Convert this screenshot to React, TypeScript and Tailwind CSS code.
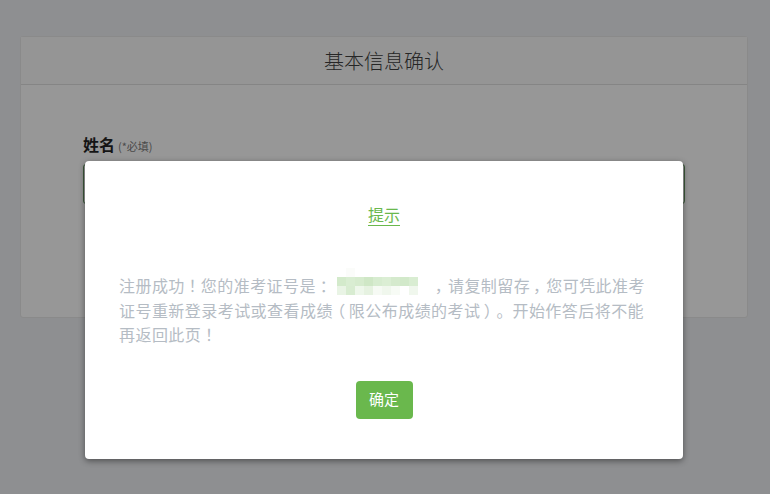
import React from "react";

const mosaic: string[][] = [
  ["#ffffff", "#fbfcfa", "#ffffff", "#ffffff", "#ffffff", "#ffffff", "#ffffff", "#ffffff", "#ffffff", "#ffffff"],
  ["#d3eacb", "#d9edd2", "#d6ebce", "#cfe7c6", "#d7ecd0", "#dbeed4", "#d5eacd", "#d2e9ca", "#d9edd2", "#ffffff"],
  ["#e9f4e5", "#d8ecd1", "#eef7eb", "#e6f2e1", "#f6faf4", "#f0f7ed", "#f7fbf5", "#ffffff", "#f0f7ed", "#ffffff"],
];

function P({ c, left }: { c: string; left?: boolean }) {
  return (
    <span
      className={left ? "inline-block w-[16px] text-left" : "inline-block w-[16px] text-center"}
      style={{ fontFeatureSettings: left ? "normal" : '"palt"' }}
    >
      {c}
    </span>
  );
}

export default function App() {
  const font = { fontFamily: '"Noto Sans CJK SC", "Noto Sans", sans-serif' };
  return (
    <div className="relative h-[494px] w-[770px] overflow-hidden bg-[#8e8f91]" style={font}>
      <div className="pt-[36px] px-[20px] pr-[22px]">
        <div className="h-[282px] rounded-[3px] border border-[#8a8a8a] bg-[#979797]">
          <div className="flex h-[48px] items-center justify-center border-b border-[#858585] bg-[#959595]">
            <span className="text-[20px] font-light text-[#262626]">基本信息确认</span>
          </div>
          <div className="pl-[62px] pr-[62px] pt-[49px]">
            <div className="flex items-baseline gap-[3px] leading-[20px]">
              <span className="text-[16px] font-bold text-[#151515]">姓名</span>
              <span className="text-[11px] text-[#4a4a4a]">(*必填)</span>
            </div>
            <div className="mt-[8px] h-[40px] w-[602px] rounded-[3px] border border-[#3c5a3a] bg-[#999999]" />
          </div>
        </div>
      </div>

      <div className="absolute left-[85px] top-[161px] flex h-[298px] w-[598px] flex-col items-center rounded-[4px] bg-white shadow-[0_2px_6px_rgba(0,0,0,0.45)]">
        <div className="mt-[42px] border-b border-[#6ab84d] text-[16px] leading-[22px] text-[#6ab84d]">提示</div>
        <div className="mt-[47px] w-[530px] text-[16px] leading-[24.5px] tracking-[0.45px] text-[#b5bcc4]">
          注册成功<P c="！" />您的准考证号是<P c="：" />
          <span className="relative inline-block h-[20px] w-[100px] align-[-4px]">
            <span className="absolute left-[5px] top-[-8px] flex flex-col">
              {mosaic.map((row, i) => (
                <span key={i} className="flex">
                  {row.map((c, j) => (
                    <span key={j} className="block h-[9px] w-[9px]" style={{ backgroundColor: c }} />
                  ))}
                </span>
              ))}
            </span>
          </span>
          <P c="，" />请复制留存<P c="，" />您可凭此准考
          <br />
          证号重新登录考试或查看成绩<P c="（" />限公布成绩的考试<P c="）" />
          <P c="。" left />开始作答后将不能
          <br />
          再返回此页<P c="！" />
        </div>
        <button className="mt-[34px] h-[38px] w-[57px] rounded-[4px] bg-[#6ab84d] text-[15px] text-white">确定</button>
      </div>
    </div>
  );
}
